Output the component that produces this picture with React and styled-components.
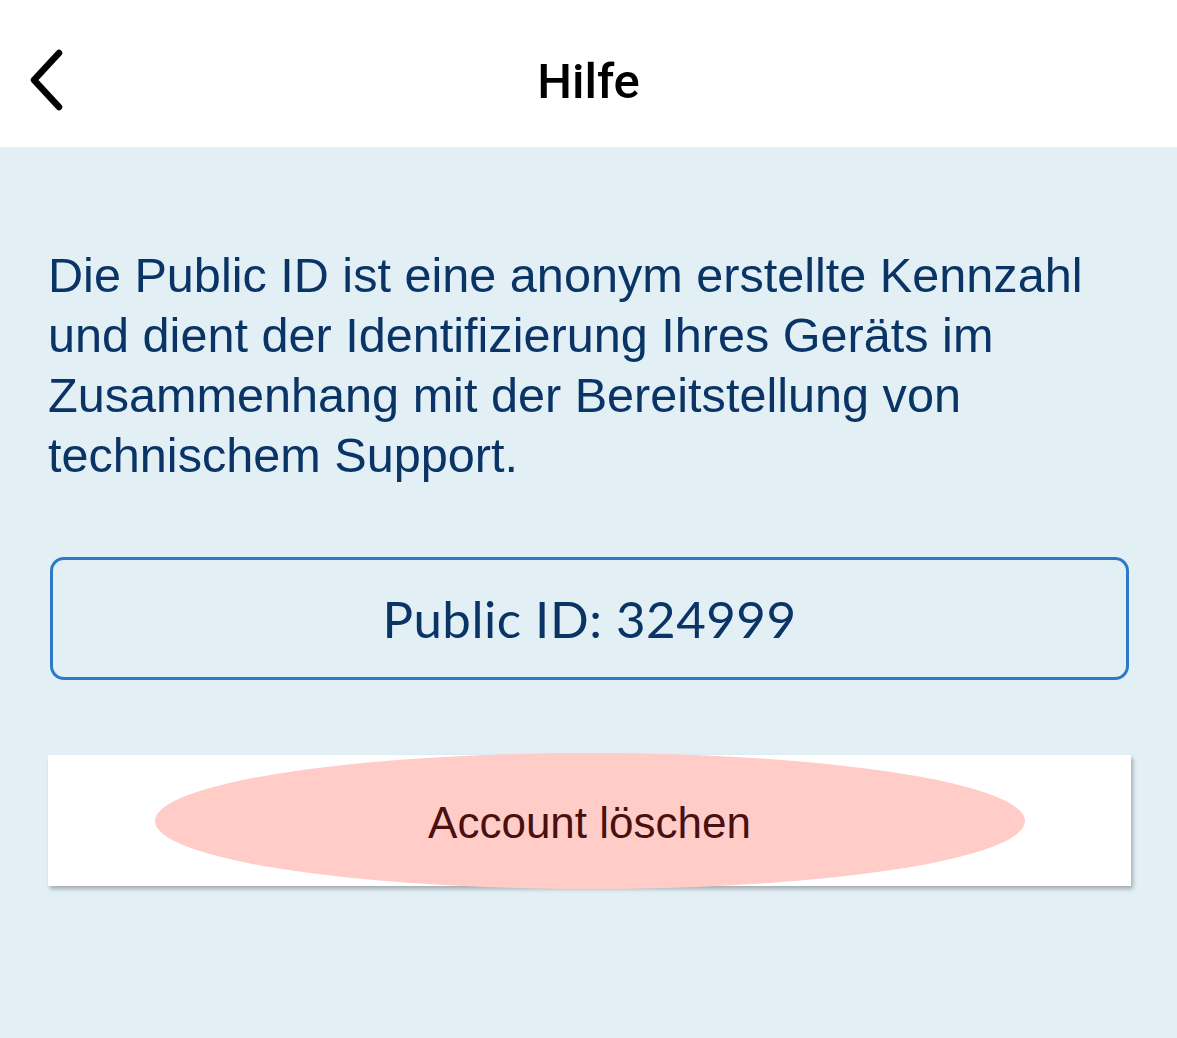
import React from 'react';
import styled, { createGlobalStyle } from 'styled-components';

const GlobalStyle = createGlobalStyle`
  html, body {
    margin: 0;
    padding: 0;
    background: #e2f0f6;
  }
  * {
    box-sizing: border-box;
  }
`;

const Page = styled.div`
  min-height: 1038px;
  background: #e2f0f6;
  display: flex;
  flex-direction: column;
`;

const Header = styled.header`
  height: 147px;
  padding-top: 16px;
  background: #ffffff;
  display: flex;
  align-items: center;
  justify-content: center;
  position: relative;
`;

const BackButton = styled.button`
  position: absolute;
  left: 22px;
  top: 46px;
  width: 48px;
  height: 68px;
  padding: 0;
  border: none;
  background: none;
  cursor: pointer;
  display: flex;
  align-items: center;
  justify-content: center;
`;

const Title = styled.h1`
  margin: 0;
  font-family: Roboto, 'Liberation Sans', sans-serif;
  font-weight: 500;
  font-size: 49px;
  color: #000000;
`;

const Content = styled.main`
  padding: 98px 48px 0 48px;
  display: flex;
  flex-direction: column;
`;

const Intro = styled.p`
  margin: 0;
  font-family: 'Liberation Sans', Arial, sans-serif;
  font-size: 48.6px;
  line-height: 60px;
  color: #0b3466;
`;

const IdBox = styled.div`
  margin: 72px 0 0 2px;
  width: 1079px;
  height: 123px;
  border: 3px solid #2f78c8;
  border-radius: 14px;
  display: flex;
  align-items: center;
  justify-content: center;
  font-family: Lato, 'Open Sans', sans-serif;
  font-size: 51px;
  color: #0b3466;
  letter-spacing: 0.5px;
`;

const DeleteCard = styled.div`
  margin-top: 75px;
  width: 1083px;
  height: 131px;
  background: #ffffff;
  box-shadow: 2px 3px 4px rgba(0, 0, 0, 0.28);
  display: flex;
  align-items: center;
  justify-content: center;
`;

const DeleteButton = styled.button`
  width: 870px;
  height: 136px;
  margin: 0;
  padding: 4px 0 0;
  border: none;
  border-radius: 50%;
  background: #ffccc8;
  font-family: 'Liberation Sans', Arial, sans-serif;
  font-size: 44px;
  color: #4a1010;
  cursor: pointer;
  flex-shrink: 0;
`;

const ChevronLeft = () => (
  <svg width="40" height="62" viewBox="0 0 40 62" fill="none">
    <path
      d="M33 4 L8 31 L33 58"
      stroke="#000"
      strokeWidth="6.5"
      strokeLinecap="round"
      strokeLinejoin="round"
    />
  </svg>
);

export default function App() {
  return (
    <Page>
      <GlobalStyle />
      <Header>
        <BackButton aria-label="Zurück">
          <ChevronLeft />
        </BackButton>
        <Title>Hilfe</Title>
      </Header>
      <Content>
        <Intro>
          Die Public ID ist eine anonym erstellte Kennzahl und dient der
          Identifizierung Ihres Geräts im Zusammenhang mit der Bereitstellung
          von technischem Support.
        </Intro>
        <IdBox>Public ID: 324999</IdBox>
        <DeleteCard>
          <DeleteButton>Account löschen</DeleteButton>
        </DeleteCard>
      </Content>
    </Page>
  );
}
